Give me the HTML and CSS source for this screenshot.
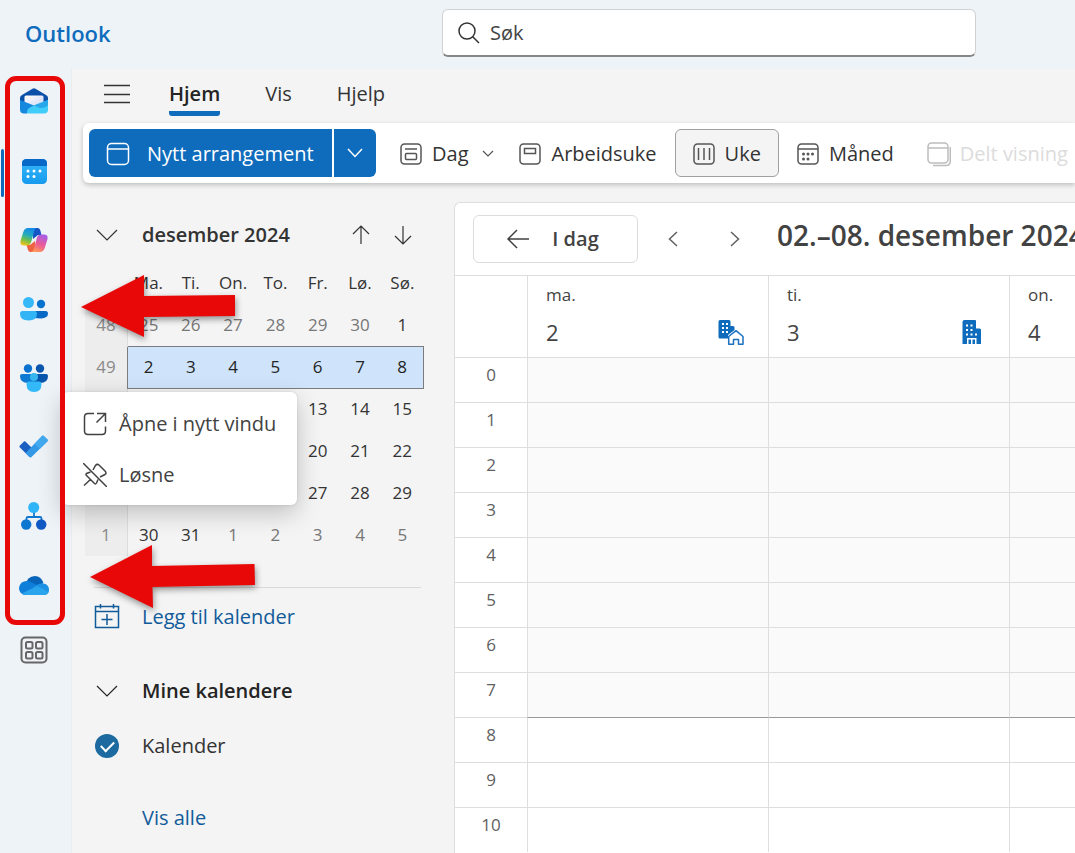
FILE: index.html
```html
<!DOCTYPE html>
<html lang="no">
<head>
<meta charset="utf-8">
<title>Outlook – Kalender</title>
<link rel="stylesheet" href="styles.css">
</head>
<body>
<div class="app">
  <header class="topbar">
    <div class="brand">Outlook</div>
    <label class="search">
      <svg width="24" height="24" viewBox="0 0 24 24" class="line"><circle cx="10" cy="10" r="8"/><path d="M15.700 15.700 22 22"/></svg>
      <input type="text" placeholder="Søk" aria-label="Søk">
    </label>
  </header>

  <div class="body">
    <nav class="rail" aria-label="Apper">
      <button class="rail-item" aria-label="E-post">
        <svg width="28" height="28" viewBox="0 0 28 28"><defs><linearGradient id="m2" x1="0" y1="0" x2="1" y2="1"><stop offset="0" stop-color="#fff"/><stop offset="1" stop-color="#cfd4f4"/></linearGradient></defs><path d="M0 10Q0 8 2 7L12.500 .700Q14 0 15.500 .700L26 7Q28 8 28 10V16H0Z" fill="#0a50a8"/><path d="M4.500 9Q4.500 7.500 6 7.500H22Q23.500 7.500 23.500 9V19H4.500Z" fill="url(#m2)"/><path d="M28 12 11 18.500Q6 20.500 7 24L8 25.500H24Q28 25.500 28 21.500Z" fill="#40cdf9"/><path d="M0 12 14 17.500 10 19.500Q6 21.500 7.500 25.500H4Q0 25.500 0 21.500Z" fill="#1689df"/><path d="M28 12 14 17.500 20 20Q26 20 28 17Z" fill="#2aa6ea"/></svg>
      </button>
      <button class="rail-item selected" aria-label="Kalender">
        <svg width="28" height="28" viewBox="0 0 28 28"><defs><linearGradient id="c1" x1="0" y1="0" x2="0" y2="1"><stop offset="0" stop-color="#38b9f8"/><stop offset="1" stop-color="#159aef"/></linearGradient></defs><rect x="2" y="2" width="25" height="25" rx="4.500" fill="url(#c1)"/><path d="M2 9V6.500Q2 2 6.500 2H22.500Q27 2 27 6.500V9Z" fill="#0868c7"/><g fill="#fff"><circle cx="8" cy="14" r="1.500"/><circle cx="14" cy="14" r="1.500"/><circle cx="20" cy="14" r="1.500"/><circle cx="8" cy="19.500" r="1.500"/><circle cx="14" cy="19.500" r="1.500"/></g></svg>
      </button>
      <button class="rail-item" aria-label="Copilot">
        <svg width="28" height="28" viewBox="0 0 28 28"><defs><linearGradient id="p1" x1=".6" y1="0" x2=".3" y2="1"><stop offset="0" stop-color="#1687e8"/><stop offset=".4" stop-color="#22abc0"/><stop offset=".7" stop-color="#6fbf4a"/><stop offset="1" stop-color="#f1c21b"/></linearGradient><linearGradient id="p2" x1=".7" y1="0" x2=".3" y2="1"><stop offset="0" stop-color="#a45de8"/><stop offset=".55" stop-color="#ec5b96"/><stop offset="1" stop-color="#ff9a5a"/></linearGradient></defs><path d="M13 2H17.500Q19.500 2 20.200 4L21.500 9H18L13 13Z" fill="#1555c4"/><path d="M15 26H10.500Q8.500 26 8 24L6.500 19H10L15 15Z" fill="#ef6240"/><path d="M8 2H17Q15 2 14.200 5L11.300 15.500Q10.200 19.500 7 19.500H4Q-.500 19.500 .600 14.500L3.300 6Q4.500 2 8 2Z" fill="url(#p1)"/><path d="M20 26H11Q13 26 13.800 23L16.700 12.500Q17.800 8.500 21 8.500H24Q28.500 8.500 27.400 13.500L24.700 22Q23.500 26 20 26Z" fill="url(#p2)"/></svg>
      </button>
      <button class="rail-item" aria-label="Personer">
        <svg width="28" height="28" viewBox="0 0 28 28"><circle cx="21" cy="9" r="4.200" fill="#0873cf"/><path d="M14 16H25.500Q28 16 28 18.500Q28 23 21 23.500L14 23Z" fill="#0869c5"/><circle cx="8.500" cy="7.500" r="5.500" fill="#35b8f8"/><path d="M2.500 16H15Q17 16 17 18.500Q17 25.500 8.700 25.500Q0 25.500 0 18.500Q0 16 2.500 16Z" fill="#32b5f7"/></svg>
      </button>
      <button class="rail-item" aria-label="Grupper">
        <svg width="28" height="28" viewBox="0 0 28 28"><circle cx="8" cy="4.500" r="4.200" fill="#0b72cf"/><circle cx="20" cy="4.500" r="4.200" fill="#0a55ad"/><path d="M2 10H14V19H8Q0 19 0 12Q0 10 2 10Z" fill="#0d79d2"/><path d="M14 10H26Q28 10 28 12Q28 19 20 19H14Z" fill="#0754ad"/><path d="M8.500 17.500H19.500Q21.500 17.500 21.500 20Q21.500 28 14 28Q6.500 28 6.500 20Q6.500 17.500 8.500 17.500Z" fill="#34b9f8"/><circle cx="14" cy="13" r="4" fill="#37b5ef"/></svg>
      </button>
      <button class="rail-item" aria-label="To Do">
        <svg width="30" height="28" viewBox="0 0 30 28"><path d="M.700 14.200Q0 13.500 .700 12.800L5 8.500Q5.700 7.800 6.400 8.500L16 18 10.500 24Z" fill="#1c5fc2"/><path d="M6.500 20 23 3Q23.900 2 24.800 3L28.500 6.500Q29.200 7.300 28.500 8.200L12.500 24Q11.500 25 10.500 24Z" fill="#3399e6"/><path d="m15.500 10.700 7.500-7.700Q23.900 2 24.800 3l3.700 3.500Q29.200 7.300 28.500 8.200L21 15.700Z" fill="#43aaf0"/></svg>
      </button>
      <button class="rail-item" aria-label="Organisasjonskart">
        <svg width="28" height="28" viewBox="0 0 28 28"><path d="M14 8V15M6.500 21V16.500Q6.500 15 8 15H20Q21.500 15 21.500 16.500V21" fill="none" stroke="#1277cc" stroke-width="1.800"/><circle cx="13.700" cy="5.500" r="5.500" fill="#2fb4f8"/><circle cx="6.200" cy="22.500" r="5.200" fill="#0d76d0"/><circle cx="21.200" cy="22.500" r="5.200" fill="#1059c5"/></svg>
      </button>
      <button class="rail-item" aria-label="OneDrive">
        <svg width="30" height="28" viewBox="0 0 30 28"><path d="M6 15Q8 5 16 5Q22 5 24.500 12L16 17Z" fill="#0864b8"/><path d="M5 24Q0 22 0 17Q1 10 8 10Q11 10 18 14.500L23 24Z" fill="#0f7fda"/><path d="M14 17Q18 12 24 12.500Q30 13 30 19Q30 23 26 24Z" fill="#1a91e2"/><path d="M3 22.500 18 15Q24 18 29.500 21Q28 24 25 24H7Q4 24 3 22.500Z" fill="#2aa5ed"/></svg>
      </button>
      <button class="rail-item apps" aria-label="Flere apper">
        <svg width="28" height="28" viewBox="0 0 28 28" fill="none" stroke="#666" stroke-width="2"><rect x="1.500" y="1.500" width="25" height="25" rx="4"/><rect x="6" y="6" width="6.500" height="6.500" rx="1.500"/><rect x="16" y="6" width="6.500" height="6.500" rx="1.500"/><rect x="6" y="16" width="6.500" height="6.500" rx="1.500"/><rect x="16" y="16" width="6.500" height="6.500" rx="1.500"/></svg>
      </button>
    </nav>

    <main class="main">
      <div class="tabs">
        <button class="menu-toggle" aria-label="Navigasjon"><svg width="26" height="20" viewBox="0 0 26 20" class="line"><path d="M0 1.500H26M0 10.500H26M0 18.500H26"/></svg></button>
        <button class="tab active">Hjem</button>
        <button class="tab">Vis</button>
        <button class="tab">Hjelp</button>
      </div>

      <div class="toolbar">
        <button class="new-event"><svg width="24" height="24" viewBox="0 0 24 24" class="line"><rect x="1.500" y="1.500" width="21" height="21" rx="4"/><path d="M1.500 7H22.500"/></svg>Nytt arrangement</button>
        <button class="new-more" aria-label="Flere valg"><svg width="16" height="10" viewBox="0 0 16 10" class="line"><path d="m1 1 7 7.500L15 1"/></svg></button>
        <button class="tool day"><svg width="22" height="22" viewBox="0 0 22 22" class="line"><rect x="1" y="1" width="20" height="20" rx="3.500"/><path d="M5 6H17"/><rect x="5.500" y="10.500" width="11" height="6" rx="1"/></svg>Dag<svg class="drop line thin" width="12" height="8" viewBox="0 0 12 8"><path d="m1 1 5 5 5-5"/></svg></button>
        <button class="tool"><svg width="22" height="22" viewBox="0 0 22 22" class="line"><rect x="1" y="1" width="20" height="20" rx="3.500"/><rect x="5.500" y="5.500" width="11" height="5"/></svg>Arbeidsuke</button>
        <button class="tool pressed" aria-pressed="true"><svg width="22" height="22" viewBox="0 0 22 22" class="line"><rect x="1" y="1" width="20" height="20" rx="3.500"/><path d="M5.500 5V17M11 5V17M16.500 5V17"/></svg>Uke</button>
        <button class="tool"><svg width="22" height="22" viewBox="0 0 22 22" class="line"><rect x="1" y="1" width="20" height="20" rx="3.500"/><path d="M1 6H21"/><g fill="#555" stroke="none"><circle cx="6.500" cy="11" r="1.500"/><circle cx="11" cy="11" r="1.500"/><circle cx="15.500" cy="11" r="1.500"/><circle cx="6.500" cy="16" r="1.500"/><circle cx="11" cy="16" r="1.500"/></g></svg>Måned</button>
        <button class="tool split" disabled><svg width="24" height="26" viewBox="0 0 24 26" class="line"><rect x="1" y="2" width="20" height="20" rx="3.500"/><path d="M1 7H21M23.300 6V20Q23.300 24.500 19 24.500H6"/></svg>Delt visning</button>
      </div>

      <div class="content">
        <aside class="side">
          <div class="month-head">
            <button class="fold" aria-label="Skjul"><svg width="22" height="12" viewBox="0 0 22 12" class="line thin"><path d="m1 1 10 10L21 1"/></svg></button>
            <h2>desember 2024</h2>
            <button class="step" aria-label="Forrige måned"><svg width="18" height="20" viewBox="0 0 18 20" class="line thin"><path d="M9 19V1M1 9 9 1l8 8"/></svg></button>
            <button class="step" aria-label="Neste måned"><svg width="18" height="20" viewBox="0 0 18 20" class="line thin"><path d="M9 1V19M1 11l8 8 8-8"/></svg></button>
          </div>
          <table class="mini">
            <thead><tr><td></td><th>Ma.</th><th>Ti.</th><th>On.</th><th>To.</th><th>Fr.</th><th>Lø.</th><th>Sø.</th></tr></thead>
            <tbody>
              <tr><th class="wk">48</th><td class="off">25</td><td class="off">26</td><td class="off">27</td><td class="off">28</td><td class="off">29</td><td class="off">30</td><td>1</td></tr>
              <tr class="current"><th class="wk">49</th><td>2</td><td>3</td><td>4</td><td>5</td><td>6</td><td>7</td><td>8</td></tr>
              <tr><th class="wk"></th><td></td><td></td><td></td><td></td><td>13</td><td>14</td><td>15</td></tr>
              <tr><th class="wk"></th><td></td><td></td><td></td><td></td><td>20</td><td>21</td><td>22</td></tr>
              <tr><th class="wk"></th><td></td><td></td><td></td><td></td><td>27</td><td>28</td><td>29</td></tr>
              <tr><th class="wk">1</th><td>30</td><td>31</td><td class="off">1</td><td class="off">2</td><td class="off">3</td><td class="off">4</td><td class="off">5</td></tr>
            </tbody>
          </table>
          <div class="side-list">
            <a class="side-row link" href="#"><svg width="26" height="26" viewBox="0 0 26 26" class="line"><path d="M1.500 2.500H24.500V23.500H1.500ZM1.500 7.500H24.500M6.500 0V4.500M19.500 0V4.500M13 10V21M7.500 15.500H18.500"/></svg>Legg til kalender</a>
            <button class="side-row group"><svg width="26" height="12" viewBox="0 0 26 12" class="line thin"><path d="m3 1 10 10L23 1"/></svg>Mine kalendere</button>
            <label class="side-row"><input type="checkbox" checked>Kalender</label>
            <a class="side-row link all" href="#">Vis alle</a>
          </div>
        </aside>

        <section class="calendar">
          <div class="cal-head">
            <button class="today"><svg width="24" height="20" viewBox="0 0 24 20" class="line"><path d="M23 10H1.500M11 1 2 10l9 9"/></svg>I dag</button>
            <button class="page-btn" aria-label="Forrige uke"><svg width="10" height="16" viewBox="0 0 10 16" class="line"><path d="M9 1 1.500 8 9 15"/></svg></button>
            <button class="page-btn" aria-label="Neste uke"><svg width="10" height="16" viewBox="0 0 10 16" class="line"><path d="m1 1 7.500 7L1 15"/></svg></button>
            <h1>02.–08. desember 2024</h1>
          </div>
          <table class="week">
            <colgroup><col class="hour-col"><col class="day-col"><col class="day-col"><col class="day-col"></colgroup>
            <thead><tr><td></td>
              <th><span class="dow">ma.</span><span class="date">2<svg width="26" height="26" viewBox="0 0 26 26"><path d="M2 1H11Q12.500 1 12.500 2.500V7H15Q16.500 7 16.500 8.500V11L10 16V19.500H2Q.500 19.500 .500 18V2.500Q.500 1 2 1Z" fill="#0f6cbd"/><path d="M4 4h2v2H4zM8 4h2v2H8zM4 8h2v2H4zM8 8h2v2H8zM4 12h2v2H4zM8 12h2v2H8z" fill="#fff"/><path d="M10.700 17.500 18 11.700 25 17.500V25.200H20.500V20.500H15.500V25.200H10.700Z" fill="#fff" stroke="#1a72c0" stroke-width="1.500" stroke-linejoin="round"/></svg></span></th>
              <th><span class="dow">ti.</span><span class="date">3<svg width="26" height="26" viewBox="0 0 26 26"><path d="M5.500 1H16Q17 1 17 2V9.500H20.500Q22 9.500 22 11V25H3.500V3Q3.500 1 5.500 1Z" fill="#0f6cbd"/><path fill="#fff" d="M7 5.500h2v2H7zM11.500 5.500h2v2h-2zM7 10h2v2H7zM11.500 10h2v2h-2zM7 14.500h2v2H7zM11.500 14.500h2v2h-2zM16 14.500h2v2h-2zM8 19h9.500v6H16v-4.500h-2.500V25H12v-4.500H9.500V25H8z"/></svg></span></th>
              <th><span class="dow">on.</span><span class="date">4</span></th></tr></thead>
            <tbody>
              <tr class="off-hours"><th>0</th><td></td><td></td><td></td></tr>
              <tr class="off-hours"><th>1</th><td></td><td></td><td></td></tr>
              <tr class="off-hours"><th>2</th><td></td><td></td><td></td></tr>
              <tr class="off-hours"><th>3</th><td></td><td></td><td></td></tr>
              <tr class="off-hours"><th>4</th><td></td><td></td><td></td></tr>
              <tr class="off-hours"><th>5</th><td></td><td></td><td></td></tr>
              <tr class="off-hours"><th>6</th><td></td><td></td><td></td></tr>
              <tr class="off-hours last"><th>7</th><td></td><td></td><td></td></tr>
              <tr><th>8</th><td></td><td></td><td></td></tr>
              <tr><th>9</th><td></td><td></td><td></td></tr>
              <tr><th>10</th><td></td><td></td><td></td></tr>
            </tbody>
          </table>
        </section>
      </div>
    </main>
  </div>

  <div class="context-menu" role="menu">
    <button role="menuitem"><svg width="24" height="24" viewBox="0 0 24 24" class="line"><path d="M11 1.500H5Q1.500 1.500 1.500 5V19Q1.500 22.500 5 22.500H19Q22.500 22.500 22.500 19V14.500M14 1.500H22.500V10M22.500 1.500 13.500 10.500"/></svg>Åpne i nytt vindu</button>
    <button role="menuitem"><svg width="24" height="24" viewBox="0 0 24 24" class="line"><path d="M0 0 24 24M1 22.500 8 16M10 7 12.500 2.500Q14 .500 16 2L22 8Q24 10 22 11.500L17 14M7.500 9 3.500 10.500Q2.500 11.500 3.500 12.500L11.500 20.500Q12.700 21.500 13.500 20L15 16.500"/></svg>Løsne</button>
  </div>

  <div class="highlight"></div>
  <svg class="arrow arrow-top" width="156" height="66" viewBox="0 0 156 66"><path d="M0 32 63 0V21L154 20V41L63 42V62Z" fill="#e90808"/></svg>
  <svg class="arrow arrow-bottom" width="168" height="66" viewBox="0 0 168 66"><path d="M0 32 62 0V21L164.500 19 165 40 62.500 42 63 63Z" fill="#e90808"/></svg>
</div>
</body>
</html>
```
FILE: styles.css
```css
* { box-sizing: border-box; }

body {
  margin: 0;
  font-family: "Open Sans", "Noto Sans", sans-serif;
  font-size: 20px;
  line-height: 28px;
  color: #333;
}

button {
  margin: 0;
  padding: 0;
  border: 0;
  background: none;
  font: inherit;
  color: inherit;
}

h1, h2 { margin: 0; font-weight: 600; }
svg { display: block; flex: none; }
.line { fill: none; stroke: currentColor; stroke-width: 1.5; }
.line.thin { stroke-width: 1.2; }

.app {
  position: relative;
  display: flex;
  flex-direction: column;
  height: 100vh;
  overflow: hidden;
  background: #eef3f8;
}

/* Top bar */
.topbar {
  display: grid;
  grid-template-columns: 442px minmax(0, 534px) 1fr;
  align-items: center;
  flex: none;
  height: 69px;
  padding-bottom: 3px;
}

.brand {
  padding-left: 25px;
  font-size: 22px;
  font-weight: 600;
  color: #0f6cbd;
}

.search {
  display: flex;
  align-items: center;
  gap: 9px;
  height: 48px;
  padding: 0 14px;
  background: #fff;
  border: 1px solid #d1d1d1;
  border-bottom: 2px solid #868686;
  border-radius: 6px;
}

.search input {
  flex: 1;
  min-width: 0;
  padding: 0;
  border: 0;
  outline: 0;
  background: none;
  font: inherit;
}

.search input::placeholder { color: #444; opacity: 1; }

.body { display: flex; flex: 1; min-height: 0; }

/* App rail */
.rail {
  display: flex;
  flex-direction: column;
  align-items: center;
  gap: 41px;
  flex: none;
  width: 71px;
  padding: 19px 3px 0 0;
}

.rail-item { position: relative; height: 28px; }
.rail-item.apps { margin-top: -4px; }

.rail-item.selected::before {
  content: "";
  position: absolute;
  top: -8px;
  left: -19px;
  width: 3px;
  height: 48px;
  border-radius: 2px;
  background: #0f6cbd;
}

.main {
  display: flex;
  flex-direction: column;
  flex: 1;
  min-width: 0;
  background: #f4f4f4;
  border-left: 1px solid #ebecee;
}

/* Ribbon */
.tabs { display: flex; gap: 45px; height: 54px; padding-left: 32px; flex: none; }
.menu-toggle { height: 49px; margin-right: -6px; }
.tab { height: 47px; padding-top: 3px; }
.tab.active { font-weight: 600; color: #242424; border-bottom: 5px solid #0f6cbd; border-radius: 3px; padding-top: 8px; }

.toolbar {
  display: flex;
  flex: none;
  height: 60px;
  margin-left: 11px;
  padding: 6px;
  white-space: nowrap;
  background: #fff;
  border-radius: 6px 0 0 6px;
  box-shadow: 0 2px 5px rgba(0, 0, 0, .22);
}

.new-event, .new-more {
  display: flex;
  align-items: center;
  flex: none;
  color: #fff;
  background: #0f6cbd;
}

.new-event { gap: 17px; width: 243px; padding: 2px 0 0 17px; border-radius: 6px 0 0 6px; }
.new-more { justify-content: center; width: 42px; margin: 0 6px 0 2px; border-radius: 0 6px 6px 0; }

.tool {
  display: flex;
  align-items: center;
  gap: 10px;
  flex: none;
  padding: 2px 17px 0;
  border: 1px solid transparent;
  border-radius: 6px;
}

.tool svg { color: #555; }
.tool.day { padding-right: 6px; }
.tool .drop { margin-left: 4px; }
.tool.pressed { background: #f4f4f4; border-color: #a0a0a0; }
.tool:disabled { gap: 9px; padding-left: 14px; color: #dcdcdc; }
.tool:disabled svg { color: #bdbdbd; }

.content { display: flex; flex: 1; min-height: 0; }

/* Sidebar */
.side { flex: none; width: 382px; padding: 31px 0 0 13px; }

.month-head { display: flex; align-items: center; width: 339px; height: 42px; }
.month-head h2 { flex: 1; font-size: 20px; }
.fold { width: 57px; padding-left: 11px; }
.step { display: flex; justify-content: center; width: 42px; }

.mini {
  width: 339px;
  margin-top: 6px;
  table-layout: fixed;
  border-collapse: collapse;
  font-size: 17px;
  line-height: 24px;
  text-align: center;
}

.mini th, .mini td { height: 42px; padding: 0; font-weight: 400; }
.mini .wk { color: #8a8a8a; background: #ededed; border-right: 1px solid #ddd; }
.mini .off { color: #777; }
.mini .current td { background: #cfe4fa; border: solid #7c7c7c; border-width: 1px 0; color: #242424; }
.mini .current td:last-child { border-right-width: 1px; }
.mini .current .wk { border-right-color: #7c7c7c; }

.side-list {
  display: flex;
  flex-direction: column;
  width: 327px;
  margin: 31px 0 0 9px;
  border-top: 1px solid #d9d9d9;
}

.side-row {
  display: flex;
  align-items: center;
  gap: 22px;
  height: 57px;
  color: #333;
  text-decoration: none;
}

.side-row.link { color: #115b9a; }
.side-row.group { height: 92px; font-weight: 600; color: #242424; }
.side-row.group + .side-row { height: 18px; }
.side-row.all { height: 126px; padding-left: 48px; }

.side-row input {
  appearance: none;
  width: 24px;
  height: 24px;
  margin: 0 1px;
  border-radius: 50%;
  background: #1c6a9f;
  display: grid;
  place-items: center;
}

.side-row input:checked::before {
  content: "";
  width: 11px;
  height: 6px;
  border: solid #fff;
  border-width: 0 0 2px 2px;
  transform: rotate(-45deg);
  margin-bottom: 3px;
}

/* Calendar */
.calendar {
  flex: 1;
  min-width: 0;
  margin-top: 19px;
  overflow: hidden;
  background: #fff;
  border: solid #dedede;
  border-width: 1px 0 0 1px;
  border-radius: 6px 0 0 0;
}

.cal-head { display: flex; align-items: center; height: 72px; padding: 0 0 1px 18px; }

.today {
  display: flex;
  align-items: center;
  justify-content: center;
  gap: 22px;
  flex: none;
  width: 165px;
  height: 48px;
  padding-right: 6px;
  font-weight: 600;
  color: #424242;
  border: 1px solid #dcdcdc;
  border-radius: 6px;
}

.page-btn { display: flex; justify-content: center; flex: none; width: 62px; height: 16px; color: #616161; }
.today + .page-btn { margin-left: 4px; }

.cal-head h1 {
  margin-left: 11px;
  padding-bottom: 8px;
  font-size: 28px;
  line-height: 36px;
  white-space: nowrap;
  color: #424242;
}

.week { width: 795px; table-layout: fixed; border-collapse: separate; border-spacing: 0; }
.hour-col { width: 72px; }
.day-col { width: 241px; }

.week th, .week td {
  height: 45px;
  padding: 0;
  font-weight: 400;
  border-top: 1px solid #dedede;
}

.week td + td, .week th + td, .week td + th, .week th + th { border-left: 1px solid #dedede; }
.week thead th { height: 82px; padding: 6px 24px 0 18px; text-align: left; vertical-align: top; color: #444; }
.week tbody th { padding-top: 5px; font-size: 17px; line-height: 24px; vertical-align: top; color: #616161; }
.off-hours td { background: #fafafa; }
.week .last + tr td { border-top-color: #999; }
.dow { display: block; font-size: 17px; line-height: 26px; }
.date { display: flex; align-items: center; justify-content: space-between; height: 48px; font-size: 22px; }

/* Context menu */
.context-menu {
  position: absolute;
  top: 392px;
  left: 62px;
  width: 235px;
  padding: 6px 0 5px;
  background: #fff;
  border-radius: 6px;
  box-shadow: 0 8px 24px rgba(0, 0, 0, .22), 0 0 3px rgba(0, 0, 0, .12);
}

.context-menu button {
  display: flex;
  align-items: center;
  gap: 12px;
  width: 100%;
  height: 51px;
  padding-left: 21px;
  color: #424242;
}

/* Annotations */
.highlight {
  position: absolute;
  top: 76px;
  left: 5px;
  width: 60px;
  height: 549px;
  border: 5px solid #e90808;
  border-radius: 11px;
}

.arrow { position: absolute; filter: drop-shadow(1px 3px 3px rgba(0, 0, 0, .4)); overflow: visible; }
.arrow-top { top: 275px; left: 81px; }
.arrow-bottom { top: 545px; left: 90px; }
```
